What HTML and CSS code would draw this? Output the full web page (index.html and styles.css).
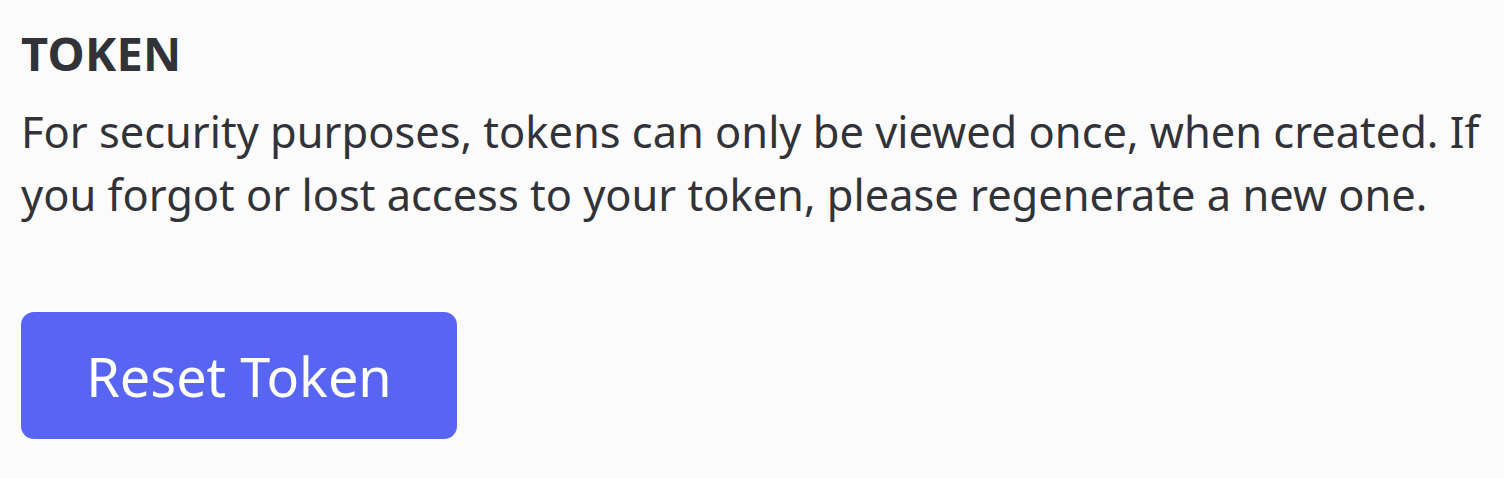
FILE: index.html
```html
<!DOCTYPE html>
<html lang="en">
<head>
    <meta charset="UTF-8">
    <title>Token</title>
    <link rel="stylesheet" href="styles.css">
</head>
<body>
    <section class="token-section">
        <h2 class="section-title">TOKEN</h2>
        <p class="description">
            For security purposes, tokens can only be viewed once, when created. If
            you forgot or lost access to your token, please regenerate a new one.
        </p>
        <button class="reset-button">Reset Token</button>
    </section>
</body>
</html>
```

FILE: styles.css
```css
body {
    margin: 0;
    background-color: #fbfbfb;
    color: #313338;
    font-family: "Noto Sans", sans-serif;
}

.token-section {
    padding: 22px 21px;
}

.section-title {
    margin: 0;
    font-size: 47px;
    line-height: 62px;
    font-weight: 700;
    letter-spacing: 0.3px;
}

.description {
    margin: 16px 0 0;
    font-size: 43.4px;
    line-height: 63px;
    max-width: 1480px;
}

.reset-button {
    margin-top: 86px;
    width: 436px;
    height: 127px;
    border: none;
    border-radius: 13px;
    background-color: #5865f2;
    color: white;
    font-family: inherit;
    font-size: 54px;
    cursor: pointer;
}
```
